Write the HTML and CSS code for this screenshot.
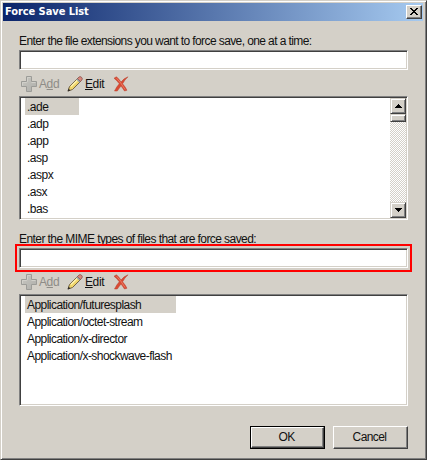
FILE: index.html
```html
<!DOCTYPE html>
<html lang="en">
<head>
<meta charset="utf-8">
<title>Force Save List</title>
<link rel="stylesheet" href="styles.css">
</head>
<body>
<svg class="defs" aria-hidden="true">
  <linearGradient id="plusFill" x1="0" y1="0" x2="1" y2="1"><stop offset="0" stop-color="#c9c8c2"/><stop offset="1" stop-color="#aeaeaa"/></linearGradient>
  <symbol id="plus" viewBox="0 0 16 16"><path d="M5.500.5h5v5h5v5h-5v5h-5v-5h-5v-5h5z" fill="url(#plusFill)" stroke="#9c9c98"/><path d="M6.500 5.800v-4.300h3M1.500 9.500v-3h4.300M10.500 6.500h4" fill="none" stroke="#d1d0ca"/></symbol>
  <symbol id="pencil" viewBox="0 0 16 16"><path d="M1 15l1.500-4.500L11 2l3 3-8.500 8.500z" fill="#f0d66c" stroke="#66563a" stroke-width=".9"/><path d="M4 10.500l7.500-7.500" stroke="#fff5b5" stroke-width="1.300"/><path d="M10.500 2.500l1.500-1.500q1.200-.9 2.500.3t.5 2.500L13.500 5.500z" fill="#d9877d" stroke="#87504a" stroke-width=".8"/><path d="M9.800 3.200l3 3" stroke="#8797ad" stroke-width="1.200"/><path d="M.6 15.500l1-2.900 1.900 1.900z" fill="#302b27"/></symbol>
  <symbol id="cross" viewBox="0 0 16 16"><path d="M1 2.200L3.500.8Q6 3 8 6 11 2.200 15 .8q-3.600 3.300-5.400 7Q12 10.500 14 14.200l-2.500.8Q9.500 12 8 10q-2 2.500-3.700 5L1.500 15q2-4.200 4.800-7.200Q4 4.500 1 2.200z" fill="#d94a33" stroke="#b9402f" stroke-width=".5"/><path d="M3.500 2.200Q8 6.500 12 13.500" fill="none" stroke="#ed8069" stroke-width=".9"/></symbol>
</svg>
<main class="dialog">
  <header class="titlebar"><span class="title">Force Save List</span>
    <button class="close" aria-label="Close"><svg width="8" height="7" viewBox="0 0 8 7" shape-rendering="crispEdges"><path d="M0 0h2v1h1v1h2V1h1V0h2v1H7v1H6v1H5v1h1v1h1v1h1v1H6V6H5V5H3v1H2v1H0V6h1V5h1V4h1V3H2V2H1V1H0z"/></svg></button>
  </header>
  <section class="content">
    <label class="label first" for="ext">Enter the file extensions you want to force save, one at a time:</label>
    <input class="field" id="ext">
    <div class="toolbar">
      <svg class="icon"><use href="#plus"/></svg><span class="add">A<u>d</u>d</span>
      <svg class="icon"><use href="#pencil"/></svg><span class="edit"><u>E</u>dit</span>
      <svg class="icon"><use href="#cross"/></svg>
    </div>
    <div class="list extensions">
      <ul class="rows"><li class="selected">.ade</li><li>.adp</li><li>.app</li><li>.asp</li><li>.aspx</li><li>.asx</li><li>.bas</li></ul>
      <div class="scrollbar"><div class="arrow"><svg width="7" height="4" shape-rendering="crispEdges"><path d="M3 0h1v1h1v1h1v1h1v1H0V3h1V2h1V1h1z"/></svg></div><div class="thumb"></div><div class="track"></div><div class="arrow"><svg width="7" height="4" shape-rendering="crispEdges"><path d="M0 0h7v1H6v1H5v1H4v1H3V3H2V2H1V1H0z"/></svg></div></div>
    </div>
    <label class="label second" for="mime">Enter the MIME types of files that are force saved:</label>
    <div class="highlight"><input class="field" id="mime"></div>
    <div class="toolbar">
      <svg class="icon"><use href="#plus"/></svg><span class="add">A<u>d</u>d</span>
      <svg class="icon"><use href="#pencil"/></svg><span class="edit"><u>E</u>dit</span>
      <svg class="icon"><use href="#cross"/></svg>
    </div>
    <div class="list mimes">
      <ul class="rows wide"><li class="selected">Application/futuresplash</li><li>Application/octet-stream</li><li>Application/x-director</li><li>Application/x-shockwave-flash</li></ul>
    </div>
    <footer class="actions"><div class="default"><button class="button">OK</button></div><button class="button cancel">Cancel</button></footer>
  </section>
</main>
</body>
</html>
```

FILE: styles.css
```css
* { box-sizing: border-box; }
body { margin: 0; background: #d4d0c8; color: #111; font: 12px/17px "Liberation Sans", Arial, sans-serif; overflow: hidden; }
.defs { position: absolute; width: 0; height: 0; }
.dialog { width: 427px; height: 460px; border: 1px solid; border-color: #d4d0c8 #404040 #404040 #d4d0c8; box-shadow: inset 1px 1px #fff, inset -1px -1px #808080; padding: 2px; }
.titlebar { display: flex; align-items: center; justify-content: space-between; height: 18px; width: 420px; padding: 0 1px 0 2px; background: linear-gradient(90deg, #0a246a, #a6caf0); }
.title { color: #fff; font: bold 11px/18px "DejaVu Sans Condensed", "DejaVu Sans", sans-serif; letter-spacing: -.07px; }
.close { display: flex; align-items: center; justify-content: center; width: 16px; height: 14px; padding: 0 1px 1px 0; background: #d4d0c8; border: 1px solid; border-color: #fff #404040 #404040 #fff; box-shadow: inset -1px -1px #808080; }
.content { display: flex; flex-direction: column; width: 389px; margin-left: 16px; }
.label { display: block; height: 17px; white-space: nowrap; letter-spacing: -.6px; }
.first { margin: 12px 0 0; }
.field { display: block; width: 389px; height: 20px; margin: 0; padding: 0 4px; outline: 0; border: 1px solid; border-color: #808080 #fff #fff #808080; box-shadow: inset 1px 1px #404040, inset -1px -1px #d4d0c8; background: #fff; font: inherit; }
.toolbar { display: flex; align-items: center; height: 26px; padding: 2px 0 0 2px; }
.icon { flex: none; width: 16px; height: 16px; }
.add { width: 27px; margin-left: 2px; margin-right: 1px; color: #8e8c87; }
.edit { width: 28px; margin-left: 2px; }
.add, .edit { letter-spacing: -.4px; }
.list { display: flex; padding: 1px; border: 1px solid; border-color: #808080 #fff #fff #808080; box-shadow: inset 1px 1px #404040, inset -1px -1px #d4d0c8; background: #fff; }
.extensions { height: 124px; }
.mimes { height: 112px; }
.rows { flex: 1; list-style: none; margin: 0; padding: 0 0 0 4px; letter-spacing: -.5px; }
.rows li { width: 54px; height: 17px; padding-left: 2px; line-height: 19px; }
.wide { letter-spacing: -.55px; }
.wide li { width: 151px; white-space: nowrap; }
.selected { background: #d4d0c8; }
.scrollbar { display: flex; flex-direction: column; width: 16px; }
.arrow, .thumb { flex: none; display: flex; align-items: center; justify-content: center; height: 16px; background: #d4d0c8; border: 1px solid; border-color: #d4d0c8 #404040 #404040 #d4d0c8; box-shadow: inset 1px 1px #fff, inset -1px -1px #808080; }
.thumb { height: 8px; }
.track { flex: 1; background: repeating-conic-gradient(#d4d0c8 0 25%, #fff 0 50%) 0 0 / 2px 2px; }
.second { margin-top: 11px; letter-spacing: -.57px; }
.highlight { width: 397px; height: 28px; margin: -4px; padding: 2px; border: 2px solid #f00; z-index: 1; }
.actions { display: flex; justify-content: flex-end; gap: 8px; margin-top: 20px; }
.default { border: 1px solid #000; width: 75px; height: 23px; }
.button { display: block; width: 73px; height: 21px; padding: 0 2px 1px 0; background: #d4d0c8; border: 1px solid; border-color: #fff #404040 #404040 #fff; box-shadow: inset -1px -1px #808080; font: inherit; line-height: 17px; letter-spacing: -.6px; color: #111; }
.cancel { width: 75px; height: 23px; }
```
